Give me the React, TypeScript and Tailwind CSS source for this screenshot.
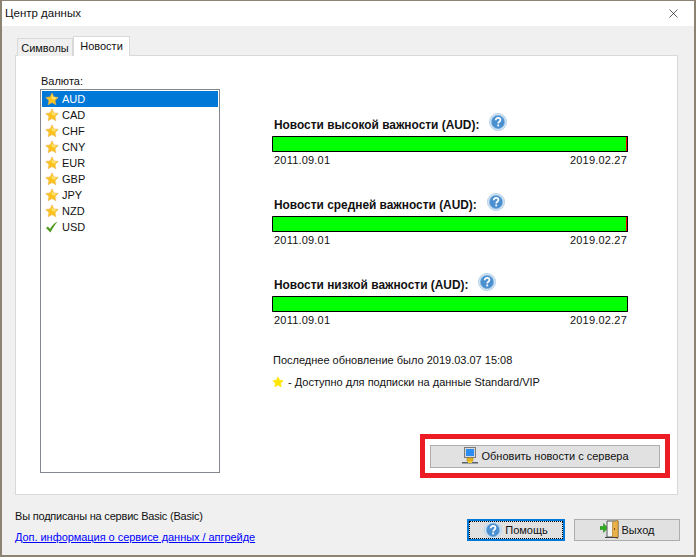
import { X } from 'lucide-react';

const currencies = ['AUD', 'CAD', 'CHF', 'CNY', 'EUR', 'GBP', 'JPY', 'NZD', 'USD'];

const sections = [
  { title: 'Новости высокой важности (AUD):', redEnd: true, top: 'mt-[42px]' },
  { title: 'Новости средней важности (AUD):', redEnd: true, top: 'mt-[32px]' },
  { title: 'Новости низкой важности (AUD):', redEnd: false, top: 'mt-[32px]' },
];

function Star({ size = 14, plain = false }: { size?: number; plain?: boolean }) {
  return (
    <svg width={size} height={size} viewBox="0 0 24 24" className="shrink-0">
      <path
        d="M12 1.5l3.2 6.9 7.5.9-5.5 5.1 1.4 7.4L12 18.2l-6.6 3.6 1.4-7.4L1.300 9.300l7.500-.9z"
        fill={plain ? '#ffe600' : '#fcc41c'}
        stroke={plain ? '#ffe600' : '#eeb04a'}
        strokeWidth="1"
      />
      {!plain && <path d="M12 4l2.400 5.200 5.300.7-3 2.500-4.700-.9z" fill="#ffe680" />}
    </svg>
  );
}

function CheckMark() {
  return (
    <svg width="14" height="14" viewBox="0 0 14 14" className="shrink-0">
      <path d="M1 8l2-1.500 2 2.500C7 5.500 9.500 3 12.500 1.500 10 4.500 7.500 8.500 5.500 12.500z" fill="#4f9a1e" />
    </svg>
  );
}

function HelpIcon({ size = 18 }: { size?: number }) {
  return (
    <svg width={size} height={size} viewBox="0 0 20 20" className="shrink-0">
      <circle cx="10" cy="10" r="9.500" fill="#d5e6f5" stroke="#b4d0e8" />
      <circle cx="10" cy="10" r="7.400" fill="#4a90d0" stroke="#8ab8de" strokeWidth="0.800" />
      <path
        d="M7.400 8c0-1.600 1.200-2.500 2.700-2.500s2.600.9 2.600 2.200c0 2-2.500 2-2.500 3.900"
        fill="none"
        stroke="#fff"
        strokeWidth="1.900"
      />
      <rect x="9.200" y="12.800" width="2" height="2" fill="#fff" />
    </svg>
  );
}

function NetworkIcon() {
  return (
    <svg width="16" height="18" viewBox="0 0 16 18" className="shrink-0">
      <rect x="2.500" y="0.500" width="11" height="10" fill="#d8d8d8" stroke="#7a7a7a" />
      <rect x="4" y="2" width="8" height="7" fill="#2b8cf0" />
      <rect x="5" y="11" width="6" height="3" fill="#e8b820" stroke="#a88210" strokeWidth="0.500" />
      <rect x="0" y="15" width="16" height="1.500" fill="#55606a" />
      <rect x="6" y="14" width="4" height="2" fill="#f0c830" />
    </svg>
  );
}

function ExitIcon() {
  return (
    <svg width="19" height="20" viewBox="0 0 19 20" className="shrink-0">
      <path d="M0 6.500h3.500V3.500l4 4.500-4 4.500v-3H0z" fill="#2fae1f" stroke="#1d7a12" strokeWidth="0.500" />
      <path d="M7 1h11v16H7z" fill="#f4f4f4" stroke="#555" />
      <path d="M12.500 2l5.500-1.500v18L12.500 17z" fill="#eab04a" stroke="#a87620" strokeWidth="0.600" />
      <rect x="5" y="17" width="13" height="1" fill="#444" />
      <rect x="14" y="8" width="1" height="2" fill="#7a4c10" />
    </svg>
  );
}

export default function App() {
  return (
    <div className="w-[696px] h-[557px] flex flex-col bg-[#f0f0f0] border-x-2 border-b-2 border-t border-[#8c8373] text-[#111] text-[11px] leading-[14px] font-['Liberation_Sans',sans-serif] overflow-hidden">
      {/* Title bar */}
      <div className="h-[25px] shrink-0 bg-white flex items-center justify-between pl-[3px] pr-[13px] pb-[1px]">
        <span className="text-[11.5px]">Центр данных</span>
        <X size={15} strokeWidth={1} className="text-black" />
      </div>

      <div className="flex-1 flex flex-col pl-[13px] pr-[16px] pt-[10px]">
        {/* Tabs */}
        <div className="flex items-end h-[20px] pl-[2px] relative z-10 -mb-px">
          <div className="h-[18px] w-[56px] bg-[#f0f0f0] border border-b-0 border-[#d9d9d9] flex items-center justify-center">
            Символы
          </div>
          <div className="h-[20px] w-[57px] bg-white border border-b-0 border-[#d9d9d9] flex items-center justify-center pb-[2px]">
            Новости
          </div>
        </div>

        {/* Panel */}
        <div className="h-[440px] bg-white border border-[#d9d9d9] flex pl-[24px]">
          <div className="w-[180px] shrink-0 pt-[18px]">
            <div className="h-[14px] pl-[1px]">Валюта:</div>
            <div className="mt-[1px] h-[384px] border border-[#828790] p-px">
              {currencies.map((code, i) => (
                <div
                  key={code}
                  className={`h-[16px] flex items-center pl-[3px] gap-[3px] ${i === 0 ? 'bg-[#0078d7] text-white' : ''}`}
                >
                  {code === 'USD' ? <CheckMark /> : <Star />}
                  <span>{code}</span>
                </div>
              ))}
            </div>
          </div>

          <div className="ml-[52px] w-[402px] shrink-0 flex flex-col pt-[20px]">
            {sections.map((s) => (
              <div key={s.title} className={`${s.top} w-[356px]`}>
                <div className="h-[14px] flex items-center pl-[2px]">
                  <span className="font-bold text-[11.9px]">{s.title}</span>
                  <span className="ml-[10px] -mt-[6px]">
                    <HelpIcon />
                  </span>
                </div>
                <div className="mt-[4px] h-[16px] border border-black bg-[#00ff00] flex justify-end">
                  {s.redEnd && <div className="w-px bg-[#ff0000]" />}
                </div>
                <div className="h-[14px] flex justify-between pl-[2px] pr-[1px] pt-[1px] tracking-[0.2px]">
                  <span>2011.09.01</span>
                  <span>2019.02.27</span>
                </div>
              </div>
            ))}

            <div className="mt-[27px] pl-[1px] h-[14px]">Последнее обновление было 2019.03.07 15:08</div>
            <div className="mt-[8px] flex items-center gap-[4px] h-[14px]">
              <Star size={12} plain />
              <span>- Доступно для подписки на данные Standard/VIP</span>
            </div>

            {/* Highlighted update button */}
            <div className="mt-[45px] ml-[148px] w-[250px] h-[44px] border-[5px] border-[#ed1c24] flex items-center justify-center">
              <button className="w-[230px] h-[23px] bg-[#e1e1e1] border border-[#adadad] flex items-center justify-center gap-[4px]">
                <NetworkIcon />
                <span>Обновить новости с сервера</span>
              </button>
            </div>
          </div>
        </div>

        {/* Footer */}
        <div className="flex-1 flex justify-between">
          <div className="flex flex-col pt-[14px]">
            <span className="h-[14px] tracking-[-0.2px]">Вы подписаны на сервис Basic (Basic)</span>
            <a href="#" className="mt-[7px] text-[#0000ff] underline tracking-[-0.05px]">
              Доп. информация о сервисе данных / апгрейде
            </a>
          </div>
          <div className="flex gap-[9px] pt-[24px] -mr-[2px]">
            <button className="w-[98px] h-[22px] bg-[#e1e1e1] border-2 border-[#0078d7] flex items-center justify-center gap-[3px] outline-1 outline-dotted outline-black -outline-offset-3">
              <HelpIcon size={18} />
              <span>Помощь</span>
            </button>
            <button className="w-[106px] h-[22px] bg-[#e1e1e1] border border-[#adadad] flex items-center justify-center gap-[3px]">
              <ExitIcon />
              <span>Выход</span>
            </button>
          </div>
        </div>
      </div>
    </div>
  );
}
